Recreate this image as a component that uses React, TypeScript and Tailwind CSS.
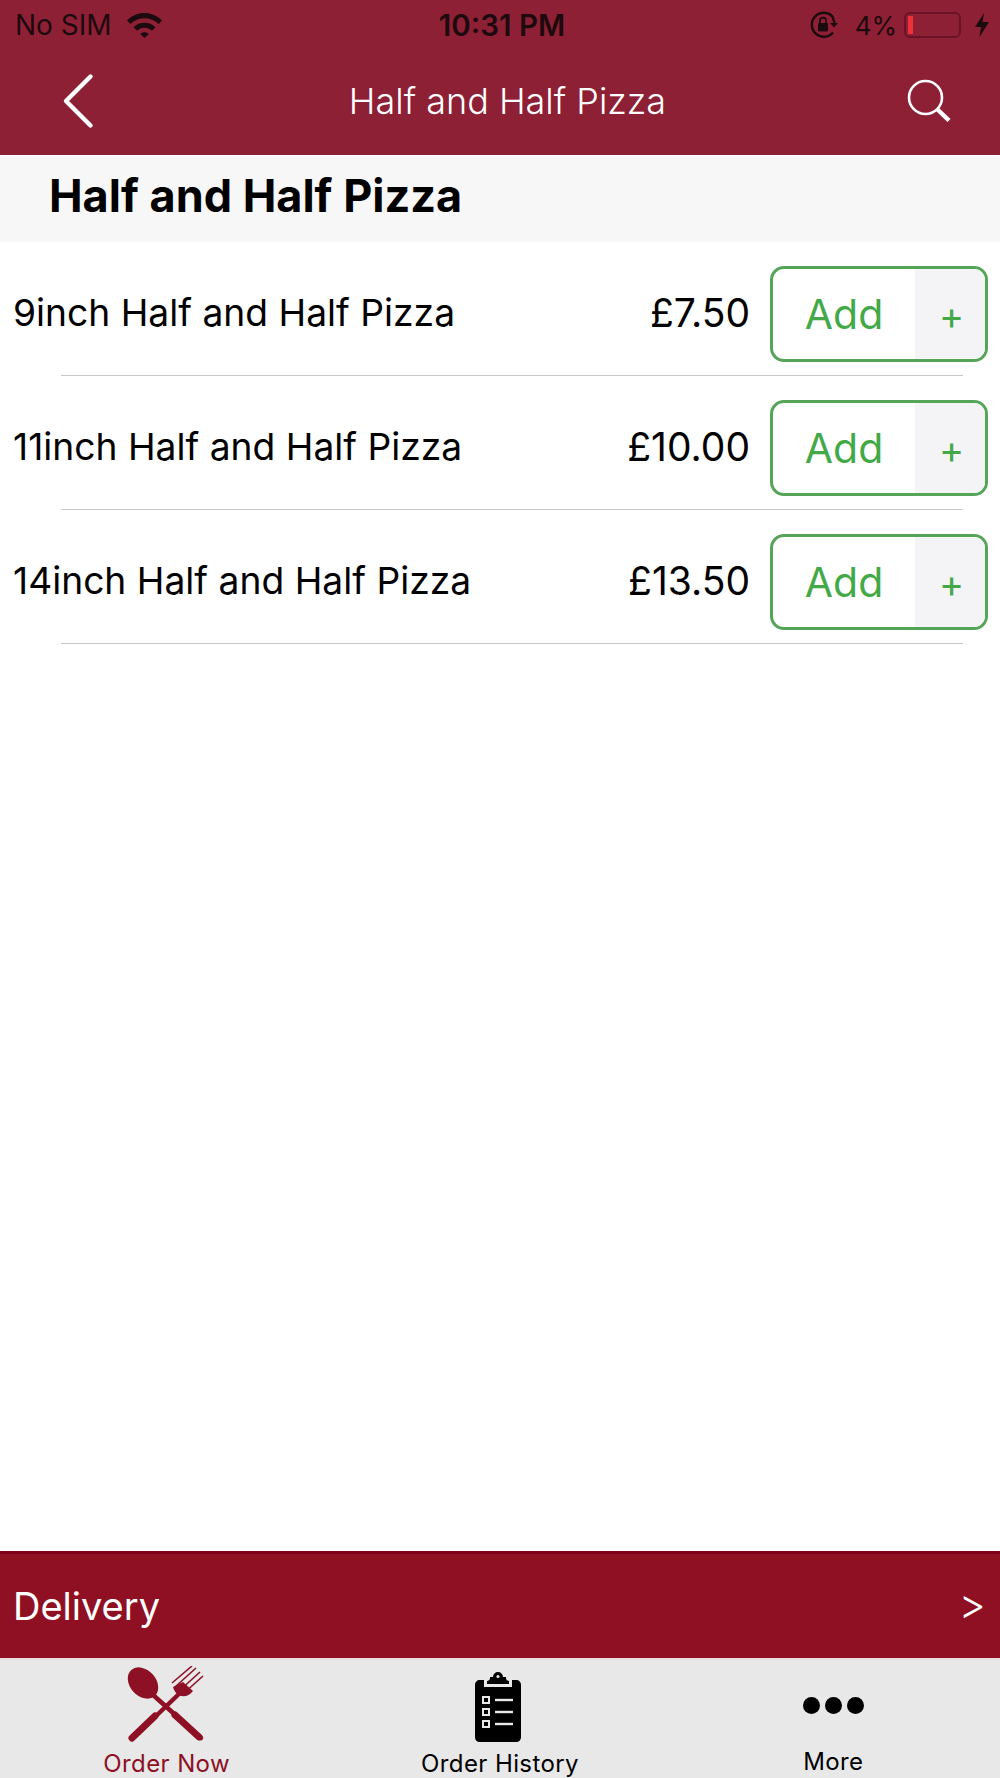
const items = [
  { name: "9inch Half and Half Pizza", price: "£7.50" },
  { name: "11inch Half and Half Pizza", price: "£10.00" },
  { name: "14inch Half and Half Pizza", price: "£13.50" },
];

function WifiIcon() {
  return (
    <svg width="35" height="26" viewBox="0 0 35 26" fill="#1c0a0e">
      <path d="M0 8.5C9.5 -1.5 25.5 -1.5 35 8.5L31.6 12C24 4.2 11 4.2 3.4 12Z" />
      <path d="M6.6 15.2C12.4 9.3 22.6 9.3 28.4 15.2L25 18.7C21 14.8 14 14.8 10 18.7Z" />
      <path d="M13.2 22C15.6 19.8 19.4 19.8 21.8 22L17.5 26Z" />
    </svg>
  );
}

function RotationLockIcon() {
  return (
    <svg width="28" height="28" viewBox="0 0 28 28" fill="none">
      <path d="M23 21.5A12 12 0 1 1 22.5 5.5L24.5 12" stroke="#1c0a0e" strokeWidth="2.4" />
      <path d="M20 12H28L24 16.5Z" fill="#1c0a0e" />
      <rect x="8" y="12" width="10" height="8.5" rx="1.2" fill="#1c0a0e" />
      <path d="M10 12V9.6A3 3 0 0 1 16 9.6V12" stroke="#1c0a0e" strokeWidth="1.8" />
    </svg>
  );
}

function BackIcon() {
  return (
    <svg width="32" height="56" viewBox="0 0 32 56" fill="none" stroke="white" strokeWidth="4.4" strokeLinecap="round" strokeLinejoin="round">
      <path d="M28.5 3.5L4 28L28.5 52.5" />
    </svg>
  );
}

function SearchIcon() {
  return (
    <svg width="44" height="44" viewBox="0 0 44 44" fill="none" stroke="white">
      <circle cx="18.5" cy="18.5" r="16.5" strokeWidth="2.6" />
      <path d="M30 30L42 41.5" strokeWidth="4.4" />
    </svg>
  );
}

function SpoonForkIcon() {
  return (
    <svg width="80" height="80" viewBox="0 0 80 80" fill="#8d1025">
      {/* spoon */}
      <ellipse cx="18" cy="17" rx="13" ry="17.5" transform="rotate(-42 18 17)" />
      <path d="M27 28L76 72" stroke="#8d1025" strokeWidth="4.5" strokeLinecap="round" />
      <path d="M50 49L74 71" stroke="#8d1025" strokeWidth="7" strokeLinecap="round" />
      {/* fork */}
      <path d="M56 26L7 73" stroke="#8d1025" strokeWidth="4.5" strokeLinecap="round" />
      <path d="M30 50L7 72" stroke="#8d1025" strokeWidth="7" strokeLinecap="round" />
      <path d="M48 21C51 32 62 33 68 25L58 16Z" />
      <path d="M50 21L71 2M54 25L75 6M58 28L78 10M47 17L67 0" stroke="#8d1025" strokeWidth="1.6" fill="none" />
    </svg>
  );
}

function ClipboardIcon() {
  return (
    <svg width="46" height="72" viewBox="0 0 46 72" fill="black">
      <path d="M15 8.5V7H18A5 5 0 0 1 28 7H31V8.5C31 10 33 11 34 11V14H12V11C13 11 15 10 15 8.5Z" />
      <path d="M9 10V17H37V10H41C44 10 46 12 46 15V67C46 70 44 72 41 72H5C2 72 0 70 0 67V15C0 12 2 10 5 10Z" />
      <circle cx="23" cy="6.5" r="1.6" fill="#e8e8e8" />
      <g fill="none" stroke="#e8e8e8" strokeWidth="2">
        <rect x="8" y="27" width="6" height="6" />
        <rect x="8" y="39" width="6" height="6" />
        <rect x="8" y="51" width="6" height="6" />
      </g>
      <g stroke="#e8e8e8" strokeWidth="2.4">
        <path d="M20 30H38" />
        <path d="M20 42H38" />
        <path d="M20 54H38" />
      </g>
    </svg>
  );
}

export default function App() {
  return (
    <div className="flex h-[1778px] w-[1000px] flex-col bg-white font-['Inter',sans-serif]">
      {/* status bar + nav */}
      <div className="h-[155px] bg-[#8e2035]">
        <div className="grid h-[50px] grid-cols-3 items-center pl-[15px] pr-[11px] text-[#1c0a0e]">
          <div className="flex items-center gap-[15px] text-[28px]">
            <span>No SIM</span>
            <WifiIcon />
          </div>
          <div className="text-center text-[29.5px] font-semibold">10:31 PM</div>
          <div className="flex items-center justify-end">
            <RotationLockIcon />
            <span className="ml-[17px] text-[26px]">4%</span>
            <div className="ml-[7px] flex h-[26px] w-[57px] items-center rounded-[6px] border-2 border-[#6b1326] pl-[2px]">
              <div className="h-[18px] w-[5px] bg-[#ef3038]" />
            </div>
            <svg className="ml-[14px]" width="14" height="24" viewBox="0 0 14 24" fill="#1c0a0e">
              <path d="M9 0L0 14H6L4.5 24L14 9H7.5Z" />
            </svg>
          </div>
        </div>
        <div className="flex h-[105px] items-center justify-between pb-[4px] pl-[62px] pr-[49px]">
          <BackIcon />
          <div className="ml-[14px] text-[36px] font-light text-white">Half and Half Pizza</div>
          <SearchIcon />
        </div>
      </div>

      <div className="mt-px flex h-[86px] items-center bg-[#f7f7f7] pb-[6px] pl-[49px] text-[45px] font-bold text-black">
        Half and Half Pizza
      </div>

      {/* menu rows */}
      <div className="flex-1">
        {items.map((item) => (
          <div key={item.name}>
            <div className="flex h-[133px] items-center pl-[13px] pr-[12px] pt-[10px] text-[37.2px] text-black">
              <div className="mb-px flex-1">{item.name}</div>
              <div className="mb-px text-[39px]">{item.price}</div>
              <div className="ml-[20px] flex h-[96px] w-[218px] overflow-hidden rounded-[14px] border-[3px] border-[#55a558] text-[#43a948]">
                <div className="flex w-[142px] items-center justify-center pt-[2px] text-[41px]">Add</div>
                <div className="flex flex-1 items-center justify-center bg-[#f4f4f6] pl-[3px] pt-[4px] text-[38px]">+</div>
              </div>
            </div>
            <div className="ml-[61px] mr-[37px] h-px bg-[#c8c8c8]" />
          </div>
        ))}
      </div>

      {/* delivery bar */}
      <div className="flex h-[107px] items-center justify-between border-t-[3px] border-[#800018] bg-[#8e1022] pl-[13px] pr-[14px] text-white">
        <span className="text-[38px]">Delivery</span>
        <span className="pb-[6px] text-[42px] font-light">&gt;</span>
      </div>

      {/* tab bar */}
      <div className="grid h-[120px] grid-cols-3 border-t-2 border-[#eadfe0] bg-[#e8e8e8] text-[24px] tracking-[0.4px]">
        <div className="flex flex-col items-center">
          <div className="mr-[3px] mt-[6px]">
            <SpoonForkIcon />
          </div>
          <div className="text-[#8d1025]">Order Now</div>
        </div>
        <div className="flex flex-col items-center text-black">
          <div className="mb-[4px] mr-[4px] mt-[10px] flex">
            <ClipboardIcon />
          </div>
          <div>Order History</div>
        </div>
        <div className="flex flex-col items-center text-black">
          <div className="mb-[30px] mt-[37px] flex gap-[5px]">
            <div className="h-[17px] w-[17px] rounded-full bg-black" />
            <div className="h-[17px] w-[17px] rounded-full bg-black" />
            <div className="h-[17px] w-[17px] rounded-full bg-black" />
          </div>
          <div>More</div>
        </div>
      </div>
    </div>
  );
}
